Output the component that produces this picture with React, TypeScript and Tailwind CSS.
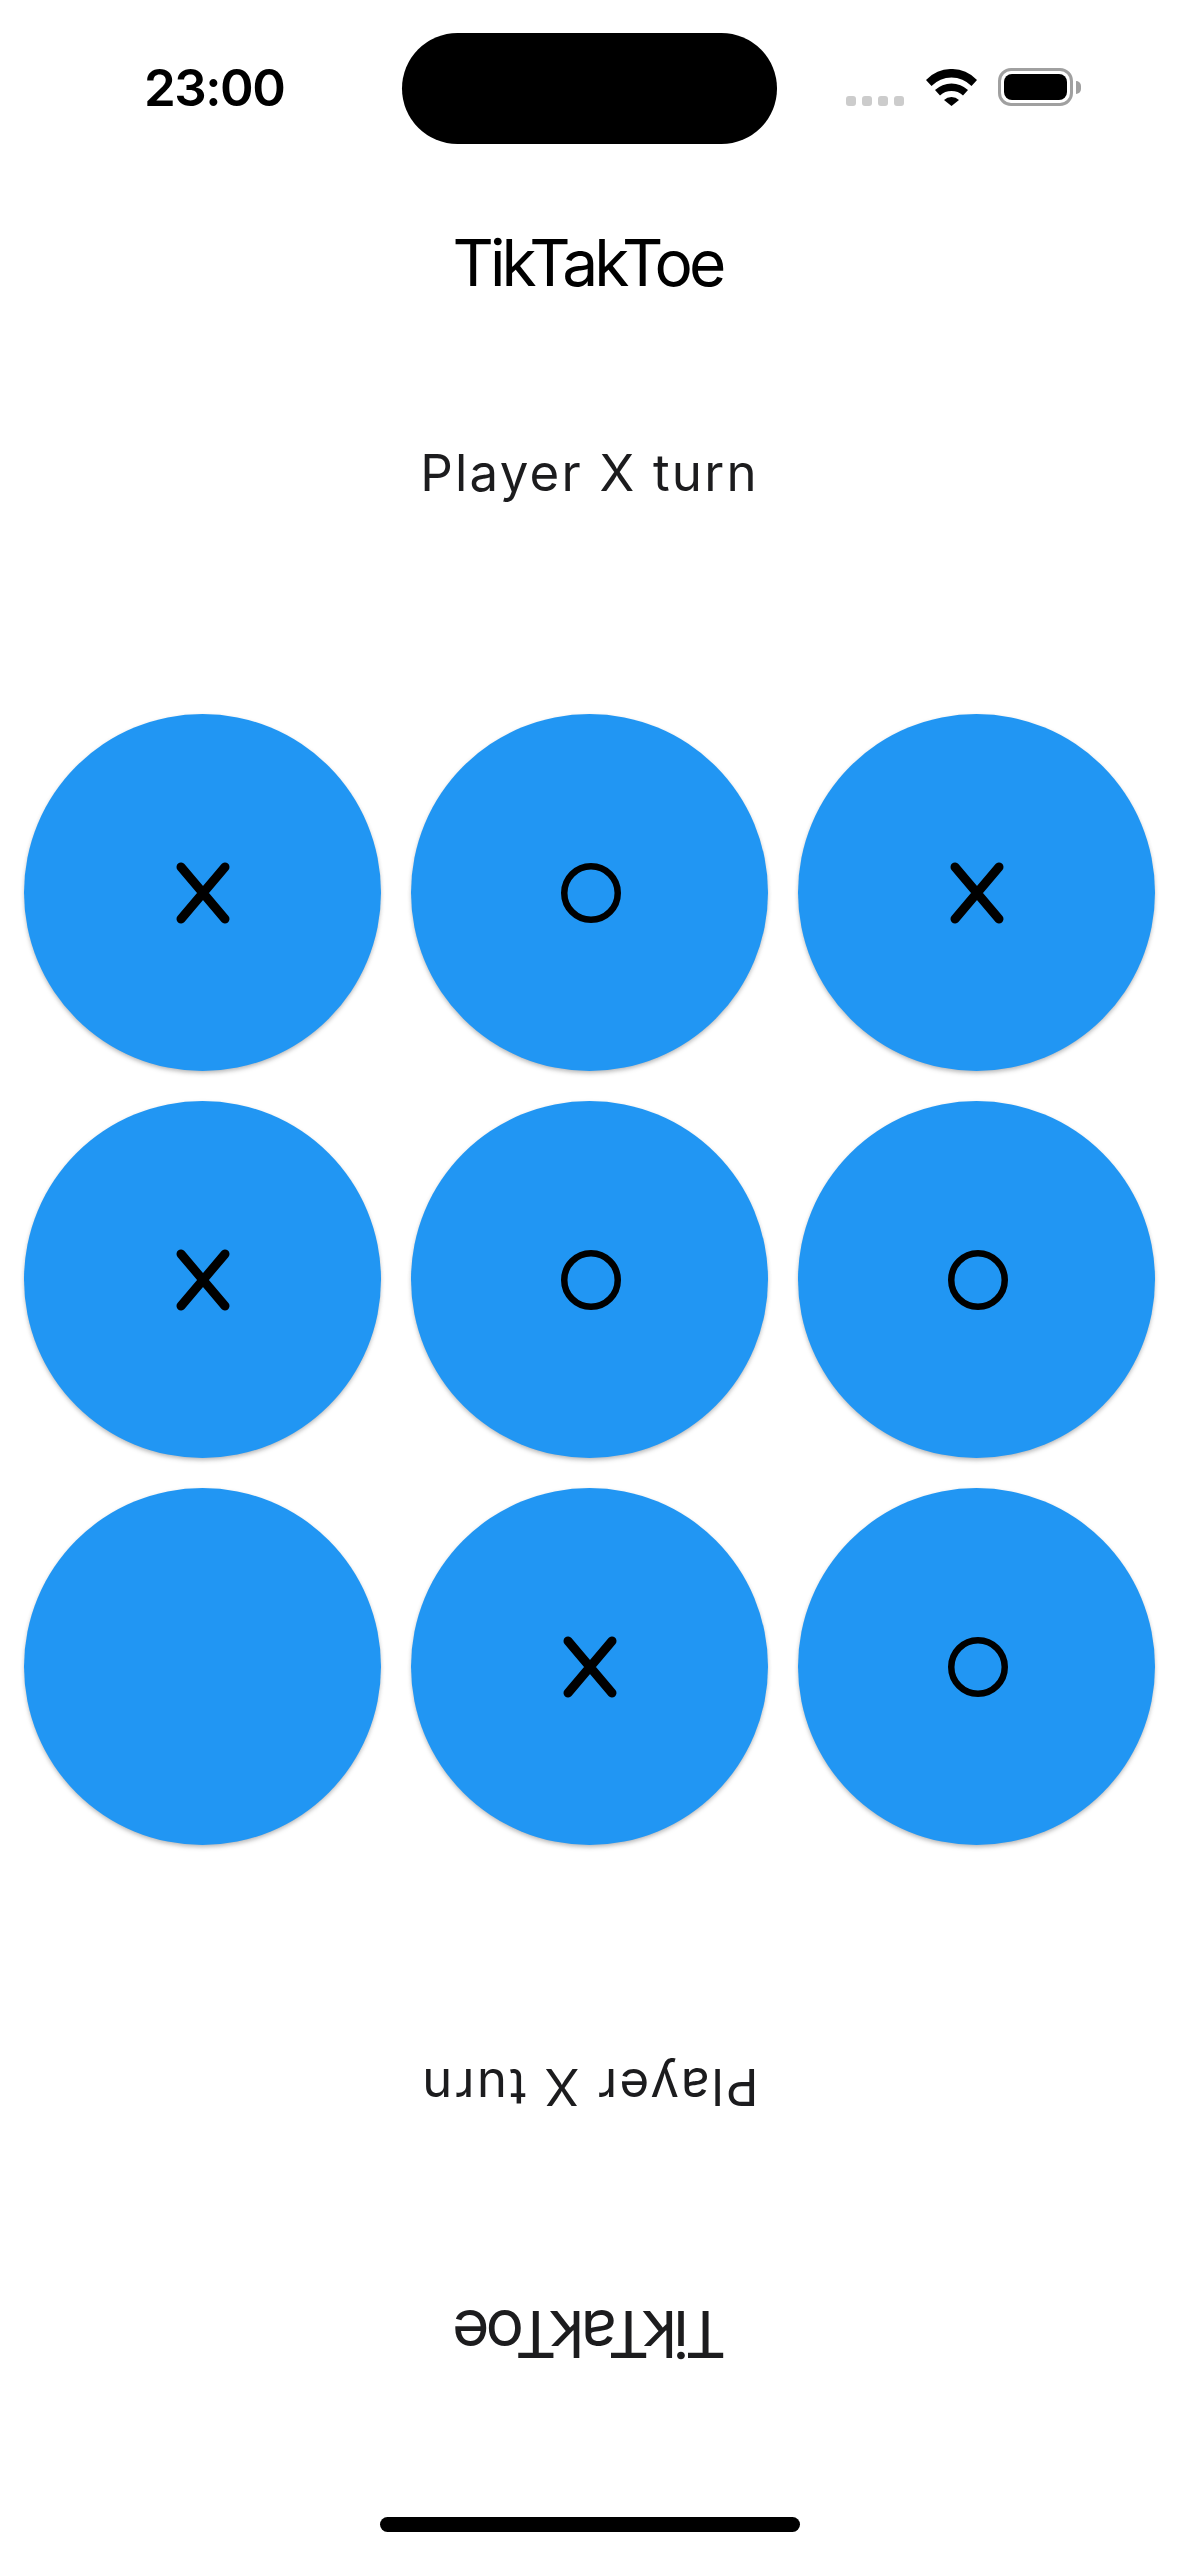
const cells = ["X", "O", "X", "X", "O", "O", "", "X", "O"];

function XMark() {
  return (
    <svg width="64" height="72" viewBox="0 0 64 72" fill="none" stroke="#000" strokeWidth="9" strokeLinecap="round">
      <path d="M10 10 L54 62 M54 10 L10 62" />
    </svg>
  );
}

function OMark() {
  return (
    <svg width="63" height="60" viewBox="0 0 63 60" fill="none" stroke="#000" strokeWidth="6.5">
      <circle cx="33" cy="30" r="26.75" />
    </svg>
  );
}

function Wifi() {
  return (
    <svg width="51" height="37" viewBox="0 0 51 37" fill="#000">
      <path d="M0 11 A35 35 0 0 1 51 11 L45.5 17 A28 28 0 0 0 5.5 17 Z" />
      <path d="M9 21 A24 24 0 0 1 42 21 L37 26.5 A17 17 0 0 0 14 26.5 Z" />
      <path d="M18 31 A11 11 0 0 1 33 31 L25.5 37 Z" />
    </svg>
  );
}

function Battery() {
  return (
    <div className="flex items-center">
      <div className="w-[75px] h-[38px] rounded-[13px] border-[3px] border-[#a0a0a0] p-[3px]">
        <div className="w-full h-full rounded-[8px] bg-black" />
      </div>
      <div className="w-[5px] h-[13px] rounded-r-[6px] bg-[#a0a0a0] ml-[3px]" />
    </div>
  );
}

function StatusBar() {
  return (
    <div className="relative h-[144px] pt-[33px] flex justify-center">
      <div className="w-[375px] h-[111px] rounded-full bg-black" />
      <span className="absolute left-[144px] top-[59px] text-[51px] leading-[57px] font-semibold tracking-[-1.5px] text-black">23:00</span>
      <div className="absolute left-[846px] top-[68px] flex items-end">
        <div className="flex gap-[6px] w-[58px]">
          {[0, 1, 2, 3].map((i) => (
            <div key={i} className="w-[10px] h-[10px] mt-[28px] rounded-[3px] bg-[#cccccc]" />
          ))}
        </div>
        <div className="ml-[22px] mr-[21px]">
          <Wifi />
        </div>
        <Battery />
      </div>
    </div>
  );
}

function Cell({ value }: { value: string }) {
  return (
    <div className="w-[357px] h-[357px] rounded-full bg-[#2196f3] flex items-center justify-center shadow-[0_3px_5px_-1px_rgba(0,0,0,0.25),0_1px_4px_rgba(0,0,0,0.08)]">
      {value === "X" && <XMark />}
      {value === "O" && <OMark />}
    </div>
  );
}

export default function App() {
  return (
    <div className="w-[1179px] h-[2556px] bg-white flex flex-col overflow-hidden font-['Inter','Noto_Sans',sans-serif]">
      <StatusBar />
      <div className="h-[237px] flex flex-col items-center text-black">
        <h1 className="mt-[80px] mr-[4px] text-[64px] leading-[78px] font-normal tracking-[-3.8px]">TikTakToe</h1>
      </div>
      <div className="h-[333px] flex justify-center">
        <p className="mt-[62px] text-[51px] leading-[60px] tracking-[2.2px] font-normal text-[#1c1c1e]">Player X turn</p>
      </div>
      <div className="grid grid-cols-[357px_357px_357px] gap-[30px] px-[24px]">
        {cells.map((c, i) => (
          <Cell key={i} value={c} />
        ))}
      </div>
      <div className="h-[272px] flex justify-center items-end">
        <p className="rotate-180 text-[51px] leading-[60px] tracking-[2.2px] font-normal text-[#1c1c1e]">Player X turn</p>
      </div>
      <div className="h-[256px] flex justify-center items-end">
        <h1 className="rotate-180 ml-[4px] text-[64px] leading-[78px] tracking-[-3.8px] text-[#1c1c1e]">TikTakToe</h1>
      </div>
      <div className="flex justify-center mt-[144px]">
        <div className="w-[420px] h-[15px] rounded-full bg-black" />
      </div>
    </div>
  );
}
